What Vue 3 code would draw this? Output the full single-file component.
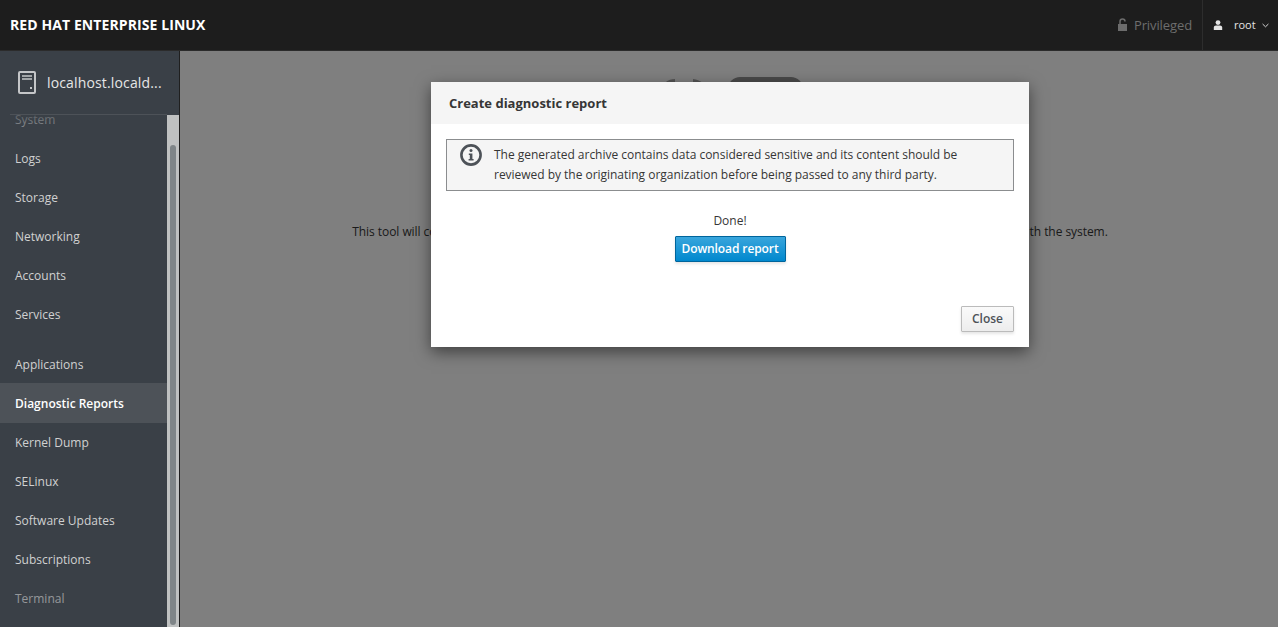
<script setup>
const items = [
  { label: 'System' },
  { label: 'Logs' },
  { label: 'Storage' },
  { label: 'Networking' },
  { label: 'Accounts' },
  { label: 'Services', cls: 'group-end' },
  { label: 'Applications' },
  { label: 'Diagnostic Reports', cls: 'active' },
  { label: 'Kernel Dump' },
  { label: 'SELinux' },
  { label: 'Software Updates' },
  { label: 'Subscriptions' },
  { label: 'Terminal' }
]
</script>

<template>
  <div class="app">
    <header class="topbar">
      <div class="brand">RED HAT ENTERPRISE LINUX</div>
      <div class="priv">
        <svg class="lock" width="9" height="13" viewBox="0 0 9 13"><path fill="#6c6c6c" d="M0 6h9v7H0z"/><path fill="none" stroke="#6c6c6c" stroke-width="1.5" d="M2 6V3.4C2 1.9 3 1 4.5 1S7 1.9 7 3.4"/></svg>
        <span>Privileged</span>
      </div>
      <div class="user">
        <svg width="10" height="10" viewBox="0 0 10 10"><circle cx="5" cy="2.6" r="2.4" fill="#e4e4e4"/><path fill="#e4e4e4" d="M.8 10V7.6C.8 6.4 1.8 5.6 3 5.6h4c1.2 0 2.2.8 2.2 2V10z"/></svg>
        <span class="uname">root</span>
        <svg width="7" height="5" viewBox="0 0 7 5"><path d="M.6 1l2.9 2.8L6.4 1" fill="none" stroke="#d8d8d8" stroke-width="1"/></svg>
      </div>
    </header>
    <div class="body">
      <aside class="sidebar">
        <div class="host">
          <svg width="20" height="24" viewBox="0 0 20 24"><rect x="1" y="1" width="16" height="21" rx="1" fill="none" stroke="#c4c6c8" stroke-width="2"/><path d="M4 5h10M4 8h10" stroke="#c4c6c8" stroke-width="1.6"/><rect x="12" y="16" width="2" height="2" fill="#c4c6c8"/></svg>
          <span class="hostname">localhost.locald...</span>
        </div>
        <div class="navwrap">
          <nav class="nav">
            <a v-for="item in items" :key="item.label" class="item" :class="item.cls">{{ item.label }}</a>
          </nav>
          <div class="fade top"></div>
          <div class="fade bottom"></div>
          <div class="track"><div class="thumb"></div></div>
          <div class="rule"></div>
        </div>
      </aside>
      <main class="main">
        <div class="page">
          <div class="logo">
            <svg width="50" height="20" viewBox="0 0 50 20"><path fill="#a8a8a8" d="M0 16C2 6 8 2 15 2v14zM33 2c8 1 14 6 17 14H33z"/></svg>
            <div class="pill"></div>
          </div>
          <p class="desc">This tool will collect system configuration and diagnostic information from this system for use with diagnosing problems with the system.</p>
        </div>
        <div class="backdrop"></div>
        <section class="modal">
          <div class="m-head">Create diagnostic report</div>
          <div class="m-body">
            <div class="alert">
              <svg class="info" width="24" height="24" viewBox="0 0 24 24"><circle cx="12" cy="12" r="9.6" fill="none" stroke="#4d5258" stroke-width="2.6"/><circle cx="12" cy="7.6" r="1.5" fill="#4d5258"/><path fill="#4d5258" d="M9.8 10.4h3.6v5.6h1.2v1.6H9.6V16h1.2v-4H9.8z"/></svg>
              <p>The generated archive contains data considered sensitive and its content should be reviewed by the originating organization before being passed to any third party.</p>
            </div>
            <div class="done">Done!</div>
            <button class="btn primary">Download report</button>
          </div>
          <div class="m-foot"><button class="btn">Close</button></div>
        </section>
      </main>
    </div>
  </div>
</template>

<style>
html, body { margin: 0; height: 100%; overflow: hidden; }
</style>

<style scoped>
.app { width: 1278px; height: 627px; display: flex; flex-direction: column; font: 12px/18px "Open Sans", sans-serif; color: #363636; overflow: hidden; }
.topbar { height: 50px; flex: none; background: #1d1d1d; border-bottom: 1px solid #2b2b2b; display: flex; align-items: center; color: #fff; }
.brand { font-size: 14px; font-weight: 700; letter-spacing: .09px; margin-left: 10px; margin-right: auto; }
.priv { display: flex; align-items: center; gap: 6px; color: #6d6d6d; font-size: 13px; letter-spacing: -.1px; padding-right: 10px; }
.lock { margin-top: -2px; margin-right: 1px; }
.user { height: 50px; border-left: 1px solid #2d2d2d; width: 76px; box-sizing: border-box; display: flex; align-items: center; padding-left: 10px; color: #e4e4e4; font-size: 11px; }
.uname { margin-left: 11px; margin-right: 6px; }
.body { flex: 1; display: flex; min-height: 0; }
.sidebar { width: 179px; flex: none; background: #3a4047; border-right: 1px solid #1f1f1f; display: flex; flex-direction: column; }
.host { height: 63px; flex: none; box-sizing: border-box; display: flex; align-items: center; padding-left: 18px; gap: 9px; }
.hostname { color: #e6e6e6; font-size: 14px; letter-spacing: .15px; }
.navwrap { flex: 1; position: relative; overflow: hidden; min-height: 0; }
.rule { position: absolute; top: 0; left: 10px; right: 12px; height: 1px; background: #4d5258; }
.nav { margin-top: -14px; display: flex; flex-direction: column; width: 167px; }
.item { height: 39px; line-height: 39px; padding-left: 15px; color: #d1d1d1; flex: none; }
.group-end { margin-bottom: 11px; }
.active { background: #4d5258; color: #fff; font-weight: 600; height: 40px; line-height: 41px; margin-top: -1px; }
.fade { position: absolute; left: 0; width: 167px; pointer-events: none; }
.fade.top { top: 0; height: 25px; background: linear-gradient(rgba(58,64,71,.8), rgba(58,64,71,.5) 50%, rgba(58,64,71,0)); }
.fade.bottom { bottom: 0; height: 50px; background: linear-gradient(rgba(58,64,71,0), rgba(58,64,71,.4) 35%, rgba(58,64,71,.4)); }
.track { position: absolute; top: 1px; right: 0; width: 12px; bottom: 0; background: #bfc1c1; }
.thumb { position: absolute; top: 30px; bottom: 2px; left: 3px; width: 6px; border-radius: 3px; background: #7f8588; }
.main { flex: 1; position: relative; background: #fff; overflow: hidden; }
.page { display: flex; flex-direction: column; align-items: center; }
.logo { display: flex; gap: 18px; margin-top: 26px; height: 40px; align-items: flex-start; padding-left: 5px; }
.pill { width: 75px; height: 40px; border-radius: 12px; background: #949494; }
.desc { margin: 106px 0 0; padding-left: 2px; text-align: center; letter-spacing: -.055px; }
.backdrop { position: absolute; inset: 0; background: rgba(0,0,0,.5); }
.modal { position: absolute; top: 31px; left: 251px; width: 598px; height: 265px; background: #fff; display: flex; flex-direction: column; box-shadow: 0 5px 15px rgba(0,0,0,.5); }
.m-head { height: 42px; flex: none; box-sizing: border-box; background: #f5f5f5; padding-left: 18px; line-height: 42px; font-size: 13px; font-weight: 700; }
.m-body { flex: 1; padding: 15px 15px 0; display: flex; flex-direction: column; align-items: center; }
.alert { align-self: stretch; box-sizing: border-box; height: 52px; border: 1px solid #8b8d8f; background: #f5f5f5; display: flex; padding: 3px 20px 0 12px; gap: 11px; }
.info { flex: none; }
.alert p { margin: 2px 0 0; line-height: 20px; letter-spacing: -.025px; }
.done { margin-top: 21px; height: 18px; }
.btn { font: 600 12px/18px "Open Sans", sans-serif; height: 26px; box-sizing: border-box; border: 1px solid #bbb; background: linear-gradient(#fafafa, #ededed); color: #4d5258; padding: 0 10px; border-radius: 1px; box-shadow: 0 2px 3px rgba(3,3,3,.1); }
.primary { margin-top: 6px; border-color: #00659c; background: linear-gradient(#39a5dc, #0088ce); color: #fff; width: 111px; padding: 0; letter-spacing: -.1px; }
.m-foot { display: flex; justify-content: flex-end; padding: 0 15px 15px; }
</style>
